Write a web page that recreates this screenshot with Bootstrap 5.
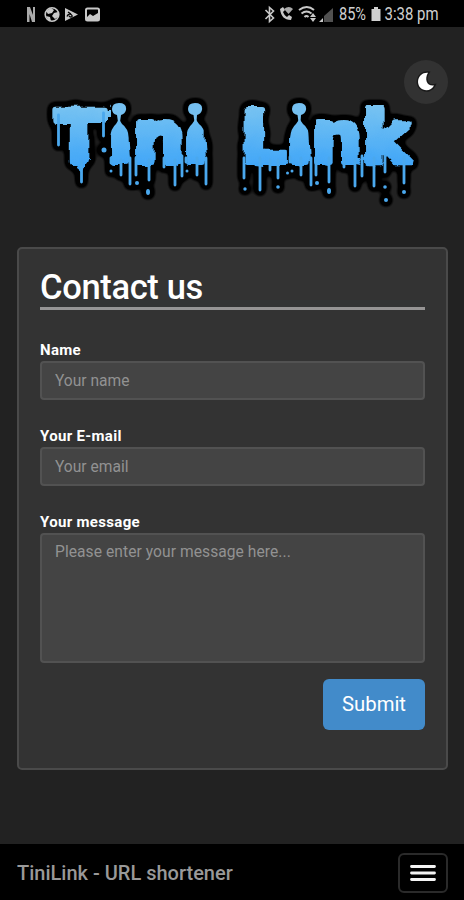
<!DOCTYPE html>
<html lang="en">
<head>
<meta charset="utf-8">
<meta name="viewport" content="width=device-width, initial-scale=1">
<title>TiniLink - Contact us</title>
<link href="https://cdn.jsdelivr.net/npm/bootstrap@5.3.0/dist/css/bootstrap.min.css" rel="stylesheet">
<style>
body{font-family:Roboto,sans-serif;background:#222;color:#fff;height:900px;overflow:hidden}
.statusbar{height:27px;background:#000;color:#d0d0d0;padding:1px 0 0 26px}
.statusbar svg{flex:none}
.brand-area{height:220px}
.theme-btn{width:44px;height:44px;top:33px;right:16px;background:#323232;border:0}
.logo{display:block;width:464px;height:220px}
.panel{margin:0 16px 0 17px;height:523px;background:#333;border:2px solid #4a4a4a;border-radius:5px;padding:18px 21px 0;color:#fff}
.title{font-size:34.5px;line-height:41px;height:43px;font-weight:500;border-bottom:3px solid #969494;margin-bottom:30px;letter-spacing:-.35px}
.field-label{display:block;font-size:15px;line-height:20px;font-weight:700;height:20px;margin-bottom:1px;letter-spacing:.32px}
.field,.field:focus{background:#444;border:2px solid #525252;border-radius:4px;color:#fff;font-size:15.6px;line-height:21px;padding:6px 13px;height:39px;box-shadow:none}
.field::placeholder{color:#929292;opacity:1}
textarea.field{height:130px;resize:none;letter-spacing:.06px;padding-top:7px}
.group{margin-bottom:26px}
.submit,.submit:hover{background:#428bca;color:#fff;width:102px;height:51px;border:0;border-radius:6px;font-size:20.3px;padding:0}
.footbar{height:56px;background:#000;color:#999;font-size:20px;font-weight:500;padding:1px 16px 0 17px}
.menu-btn{width:50px;height:40px;border:2px solid #2a2a2a;border-radius:6px;background:#000;padding:0}
</style>
<script src="https://cdn.jsdelivr.net/npm/bootstrap@5.3.0/dist/js/bootstrap.bundle.min.js"></script>
</head>
<body class="d-flex flex-column">
<div class="statusbar d-flex align-items-center justify-content-between">
  <svg width="76" height="20" viewBox="0 0 76 20">
    <path d="M1 3h3l3 8V3h2v15H6L3.500 10v8H1z" fill="#aaa"/>
    <circle cx="26" cy="10.500" r="6.800" fill="none" stroke="#c8c8c8" stroke-width="1.600"/>
    <path d="M20 7l5-3 3 2-2 3-4 1zM28 9l4-1v5l-3 2-3-3zM20 12l4 1 1 4-3-1z" fill="#c8c8c8"/>
    <path d="M39 4l13 6.500L39 17z" fill="#c8c8c8"/><path d="M41 12.500c1-3 4-3 5-1s-3 2-3 0M42 8l3 2" fill="none" stroke="#000" stroke-width="1.300"/>
    <rect x="60" y="4.500" width="13" height="12" rx="1.500" fill="none" stroke="#c8c8c8" stroke-width="2"/>
    <path d="M61 13l3-3 3 2 5-3v7H61z" fill="#c8c8c8"/>
  </svg>
  <div class="d-flex align-items-center">
    <svg width="75" height="20" viewBox="265 4 75 20">
      <path d="M266.500 10l8 8-4 3.500v-14l4 3.500-8 8" fill="none" stroke="#c8c8c8" stroke-width="1.600"/>
      <path d="M281 9c1 7 4 11 11 11l1-3-3-2-2 2c-2-1-3-3-4-5l2-2-2-3z" fill="#c8c8c8"/>
      <path d="M285 9q5-4 9 0l-4.500 5z" fill="#aaa"/>
      <path d="M300 10q8-6 15 0M302.500 13.500q5-4 10 0M305.500 17q2-2 4 0" fill="none" stroke="#c8c8c8" stroke-width="2"/>
      <path d="M311 17h6l-3-4zM311 18h6l-3 4z" fill="#c8c8c8"/>
      <path d="M320 22h4v-4z" fill="#c8c8c8"/><path d="M325 22V16l9-8v14h-9z" fill="#515151"/>
    </svg>
    <svg width="125" height="26" viewBox="339 0 125 26" fill="#d0d0d0" font-family="Roboto" font-size="18">
      <text x="339" y="19" textLength="27" lengthAdjust="spacingAndGlyphs">85%</text>
      <path d="M374 6h4v2h2.500v12h-9V8h2.500z"/>
      <text x="384.500" y="19" textLength="54" lengthAdjust="spacingAndGlyphs">3:38 pm</text>
    </svg>
  </div>
</div>
<header class="brand-area position-relative">
  <svg class="logo" viewBox="0 27 464 220" role="img" aria-label="Tini Link">
    <defs>
      <linearGradient id="ice" gradientUnits="userSpaceOnUse" x1="0" y1="104" x2="0" y2="168"><stop offset="0" stop-color="#79c4f1"/><stop offset="1" stop-color="#3fa5f8"/></linearGradient>
      <filter id="melt" filterUnits="userSpaceOnUse" x="30" y="80" width="410" height="150">
        <feTurbulence type="fractalNoise" baseFrequency=".085" numOctaves="1" seed="8" result="n"/>
        <feDisplacementMap in="SourceGraphic" in2="n" scale="8" xChannelSelector="R" yChannelSelector="G"/>
      </filter>
      <filter id="halo" filterUnits="userSpaceOnUse" x="30" y="80" width="410" height="150" color-interpolation-filters="sRGB">
        <feMorphology in="SourceAlpha" operator="dilate" radius="2"/>
        <feGaussianBlur stdDeviation="3"/>
        <feComponentTransfer result="b"><feFuncA type="linear" slope="7" intercept="-.5"/></feComponentTransfer>
        <feMerge><feMergeNode in="b"/><feMergeNode in="SourceGraphic"/></feMerge>
      </filter>
      <!-- leaves room for the round droplets above each narrow neck -->
      <mask id="pinch" maskUnits="userSpaceOnUse" x="30" y="80" width="410" height="150">
        <path fill="#fff" d="M30 80h410v150H30z"/>
        <path id="p" fill="#000" d="M111 96H132V138H129Q128 128 122 124L119 119L116 124Q111 128 110 138H108V117H111z"/>
        <path fill="#000" d="M184 96H209V138H205Q205 128 199 124L195.500 119L192 124Q187 128 186 138H184z"/>
        <path fill="#000" d="M288 96H313V138H309Q309 128 303 124L299.500 119L296 124Q291 128 290 138H288z"/>
      </mask>
    </defs>
    <g filter="url(#halo)">
      <g mask="url(#pinch)"><g filter="url(#melt)" fill="url(#ice)" stroke="url(#ice)">
        <text y="162" x="55 107 133 183 214 241 287 311 362" font-family="DejaVu Sans" font-weight="700" font-size="72" stroke-width="6" stroke-linejoin="round">Tini Link</text>
        <path stroke="none" d="M54 110h8v12l-4-1-4 3zM98 110h12v10l-4 4-4-5zM73 158h18l-5 9-5 4-5-4zM111 162l1-22 4-20h7l6 24 1 16-8 6zM187 162l1-22 4-20h7l6 24 1 16-8 6zM291 162l1-22 4-20h7l6 24 1 16-8 6zM135 158h16l-3 8-9-2zM168 158h14l-4 8-8-2zM314 158h16l-3 8-9-2zM349 158h14l-4 8-8-2zM251 160h16l-3 7-9-1z"/>
      </g></g>
      <g fill="none" stroke="#4aa8ee" stroke-width="2.800" stroke-linecap="round">
        <path d="M58.500 115V145M103.500 113V136M81.500 162V182M111 158V163M121 160V175M130 158V184M136 158V175M149 160V180M164 158V167M175 160V185M182 156V176M186 158V162M197 158V175M206 158V184"/>
        <path d="M244 158V178M260 158V190M270 160V170M278 160V178M290 157V162M301 158V175M311 158V185M316 157V175M329 158V182M344 158V167M355 160V186M362 156V176M374 158V186M385 156V172M404 157V183"/>
      </g>
      <g fill="#4aa8ee"><path fill="#75c0f1" d="M112 109q0-6 7-6 8 0 7 7-1 4-5 5l-1 7h-2l-1-7q-5-1-5-6zM188 109q0-6 7-6 8 0 7 7-1 4-5 5l-.5 7h-2l-1-7q-5.500-1-5.500-6zM292 109q0-6 7-6 8 0 7 7-1 4-5 5l-.5 7h-2l-1-7q-5.500-1-5.500-6z"/><circle cx="104" cy="150" r="2.500"/><circle cx="111" cy="171" r="1.500"/><circle cx="137" cy="183" r="2"/><ellipse cx="148" cy="192" rx="2" ry="3"/><circle cx="187" cy="171" r="1.500"/><circle cx="245" cy="189" r="1.700"/><circle cx="278" cy="187" r="1.800"/><circle cx="287.500" cy="173" r="1.500"/><circle cx="292" cy="171" r="1.500"/><circle cx="317" cy="183" r="2"/><ellipse cx="329" cy="191" rx="2" ry="3"/><circle cx="385" cy="187" r="1.800"/><circle cx="386" cy="200" r="2"/><circle cx="404" cy="192" r="2"/></g>
    </g>
  </svg>
  <button class="theme-btn btn rounded-circle position-absolute p-0" aria-label="Dark mode"><svg class="d-block" width="44" height="44" viewBox="0 0 44 44"><path d="M24 12.800C13 12 11 26 19 29.500c4 1.800 9 .3 11-4-7 1-10-6-6-12.700z" fill="#fff" stroke="#191919" stroke-width="3" paint-order="stroke"/></svg></button>
</header>
<main class="panel">
  <h1 class="title">Contact us</h1>
  <form>
    <div class="group"><label class="field-label" for="n">Name</label><input id="n" class="form-control field" placeholder="Your name"></div>
    <div class="group"><label class="field-label" for="e">Your E-mail</label><input id="e" type="email" class="form-control field" placeholder="Your email"></div>
    <div><label class="field-label" for="m">Your message</label><textarea id="m" class="form-control field" placeholder="Please enter your message here..."></textarea></div>
    <div class="d-flex justify-content-end mt-3"><button type="button" class="btn submit">Submit</button></div>
  </form>
</main>
<footer class="footbar mt-auto d-flex align-items-center justify-content-between">
  <span>TiniLink - URL shortener</span>
  <button class="menu-btn btn d-flex align-items-center justify-content-center" aria-label="Menu"><svg width="28" height="20" viewBox="0 0 28 20"><path d="M2.500 3.500h23M2.500 10h23M2.500 16.500h23" stroke="#f4f4f4" stroke-width="2.800" stroke-linecap="round"/></svg></button>
</footer>
</body>
</html>
